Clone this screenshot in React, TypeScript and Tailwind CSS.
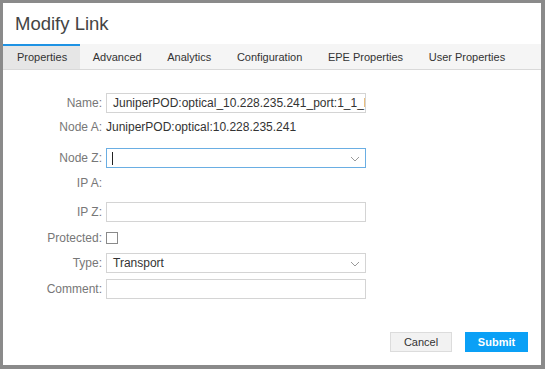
import React from "react";

const Chevron = () => (
  <svg width="10" height="6" viewBox="0 0 10 6" className="absolute right-[5px] top-[7px]">
    <path d="M1 1 L5 5 L9 1" fill="none" stroke="#9a9a9a" strokeWidth="1" />
  </svg>
);

function Row({ label, children, className = "" }: { label: string; children?: React.ReactNode; className?: string }) {
  return (
    <div className={`flex h-5 items-center ${className}`}>
      <div className="w-[103px] shrink-0 text-right text-[12px] text-[#777] pr-[4px]">{label}</div>
      {children}
    </div>
  );
}

export default function App() {
  const tabs = ["Properties", "Advanced", "Analytics", "Configuration", "EPE Properties", "User Properties"];
  return (
    <div
      className="relative w-[545px] h-[369px] bg-white border-t-[3px] border-l-[3px] border-r-[4px] border-b-[4px] border-[#8a8a8a] flex flex-col"
      style={{ fontFamily: '"Liberation Sans", Arial, sans-serif' }}
    >
      <div className="h-[41px] flex items-center pl-[12px] text-[18.5px] text-[#444]">Modify Link</div>
      <div className="h-[26px] bg-[#f5f5f5] border-b border-[#d9d9d9] flex">
        {tabs.map((t, i) => (
          <div
            key={t}
            className={`h-full flex items-center text-[11px] text-[#333] ${i === 0 ? "pl-[14px] pr-[12.8px] bg-[#e6e6e6] border-t-2 border-[#1f93e4]" : "px-[12.8px] border-t-2 border-transparent"}`}
          >
            {t}
          </div>
        ))}
      </div>
      <div className="flex flex-col pt-[23px]">
        <Row label="Name:">
          <div className="w-[260px] h-5 border border-[#d4d4d4] flex items-center pl-[6px] pr-[2px] overflow-hidden whitespace-nowrap text-[12px] text-[#333]">
            JuniperPOD:optical_10.228.235.241_port:1_1_LINK
          </div>
        </Row>
        <Row label="Node A:" className="mt-[4px]">
          <span className="text-[12px] text-[#333]">JuniperPOD:optical:10.228.235.241</span>
        </Row>
        <Row label="Node Z:" className="mt-[11px]">
          <div className="relative w-[260px] h-5 border border-[#6aaee3] flex items-center pl-[5px]">
            <div className="w-px h-[13px] bg-[#222]" />
            <Chevron />
          </div>
        </Row>
        <Row label="IP A:" className="mt-[5px]" />
        <Row label="IP Z:" className="mt-[9px]">
          <div className="w-[260px] h-5 border border-[#d4d4d4]" />
        </Row>
        <Row label="Protected:" className="mt-[6px]">
          <div className="w-[12px] h-[12px] border border-[#8a8a8a] bg-white" />
        </Row>
        <Row label="Type:" className="mt-[5px]">
          <div className="relative w-[260px] h-5 border border-[#d4d4d4] flex items-center pl-[6px] text-[12px] text-[#333]">
            Transport
            <Chevron />
          </div>
        </Row>
        <Row label="Comment:" className="mt-[6px]">
          <div className="w-[260px] h-5 border border-[#d4d4d4]" />
        </Row>
      </div>
      <div className="flex justify-end gap-[13px] pr-[13px] mt-[33px]">
        <div className="w-[62px] h-5 bg-[#f2f2f2] border border-[#dcdcdc] flex items-center justify-center text-[11px] text-[#333]">
          Cancel
        </div>
        <div className="w-[63px] h-5 bg-[#0aa0f6] flex items-center justify-center text-[11px] font-bold text-white">
          Submit
        </div>
      </div>
    </div>
  );
}
